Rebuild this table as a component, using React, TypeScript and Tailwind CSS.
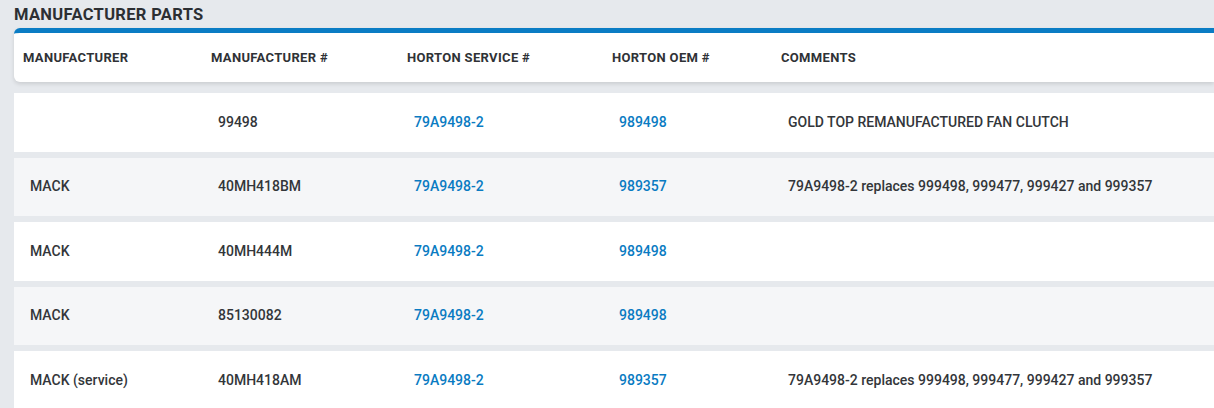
import React from 'react';

type Part = {
    manufacturer: string;
    number: string;
    service: string;
    oem: string;
    comments: string;
};

const parts: Part[] = [
    { manufacturer: '', number: '99498', service: '79A9498-2', oem: '989498', comments: 'GOLD TOP REMANUFACTURED FAN CLUTCH' },
    { manufacturer: 'MACK', number: '40MH418BM', service: '79A9498-2', oem: '989357', comments: '79A9498-2 replaces 999498, 999477, 999427 and 999357' },
    { manufacturer: 'MACK', number: '40MH444M', service: '79A9498-2', oem: '989498', comments: '' },
    { manufacturer: 'MACK', number: '85130082', service: '79A9498-2', oem: '989498', comments: '' },
    { manufacturer: 'MACK (service)', number: '40MH418AM', service: '79A9498-2', oem: '989357', comments: '79A9498-2 replaces 999498, 999477, 999427 and 999357' },
];

// column widths shared by header and rows
const cols = ['w-[188px]', 'w-[196px]', 'w-[205px]', 'w-[169px]', 'flex-1'];

const App: React.FC = () => {
    return (
        <div className="h-[408px] overflow-hidden bg-[#e6e9ed] font-['Roboto',sans-serif] text-[#33363a]">
            <h2 className="px-[14px] pt-[5px] text-[16.5px] font-bold leading-[20px] tracking-[0.02em] text-[#2c2f33]">
                MANUFACTURER PARTS
            </h2>

            <div className="pl-[14px] pt-[3px]">
                {/* Header */}
                <div className="flex h-[54px] items-center rounded-l-md border-t-[5px] border-[#0a7cc4] bg-white pl-[9px] pt-[1px] shadow-[0_2px_4px_rgba(0,0,0,0.12)]">
                    {['MANUFACTURER', 'MANUFACTURER #', 'HORTON SERVICE #', 'HORTON OEM #', 'COMMENTS'].map((label, i) => (
                        <div key={label} className={`${cols[i]} text-[13px] font-bold tracking-[0.025em] text-[#2f3236]`}>
                            {label}
                        </div>
                    ))}
                </div>

                {/* Rows */}
                <div className="mt-[11px] flex flex-col gap-[6px]">
                    {parts.map((part, idx) => (
                        <div
                            key={idx}
                            className={`flex h-[58.5px] shrink-0 items-center pl-[16px] text-[14px] font-medium ${idx % 2 === 1 ? 'bg-[#f5f6f8]' : 'bg-white'}`}
                        >
                            <div className={cols[0]}>{part.manufacturer}</div>
                            <div className={cols[1]}>{part.number}</div>
                            <div className={`${cols[2]} text-[#0a7bc2]`}>{part.service}</div>
                            <div className={`${cols[3]} text-[#0a7bc2]`}>{part.oem}</div>
                            <div className={cols[4]}>{part.comments}</div>
                        </div>
                    ))}
                </div>
            </div>
        </div>
    );
};

export default App;
